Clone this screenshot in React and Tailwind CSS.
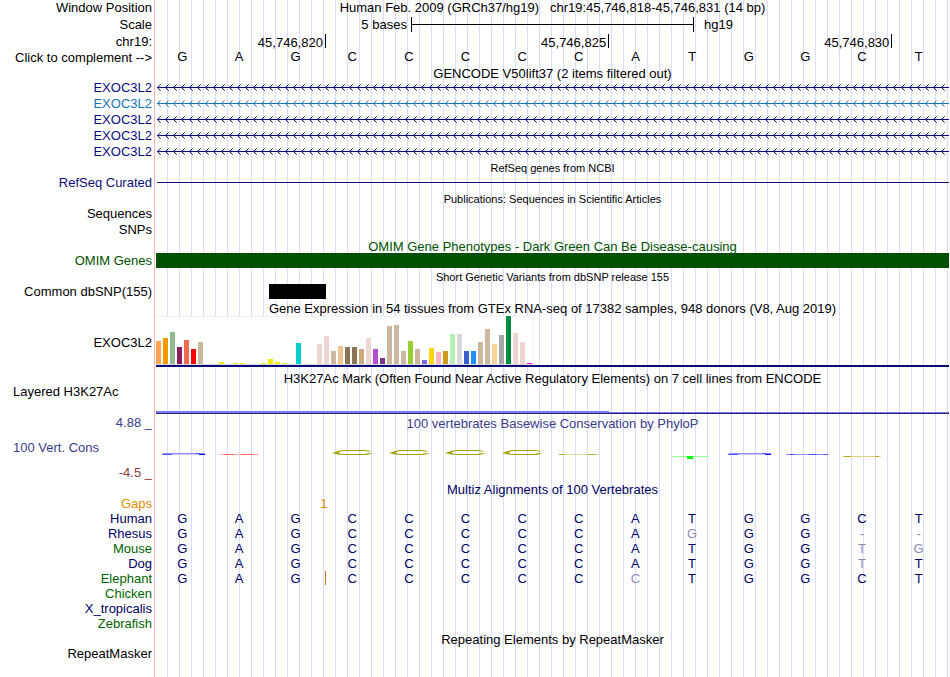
import React, { useState } from "react";

const bases = "GAGCCCCCATGGCT".split("");
const complement = { A: "T", T: "A", G: "C", C: "G" };

// [height, color] for each of the 54 tissues
const tissues = [
  [23, "#ffa54f"], [26, "#ee9a00"], [32, "#8fbc8f"], [17, "#8b1c62"],
  [24, "#ee6a50"], [15, "#ff0000"], [22, "#cdb79e"], [0, "#eeee00"],
  [0, "#eeee00"], [2, "#eeee00"], [0, "#eeee00"], [1, "#eeee00"],
  [1, "#eeee00"], [0, "#eeee00"], [0, "#eeee00"], [1, "#eeee00"],
  [5, "#eeee00"], [2, "#eeee00"], [1, "#eeee00"], [0, "#eeee00"],
  [21, "#00cdcd"], [0, "#ee82ee"], [0, "#9ac0cd"], [20, "#eed5d2"],
  [28, "#eed5d2"], [13, "#cdb79e"], [18, "#eec591"], [17, "#8b7355"],
  [17, "#8b7355"], [15, "#cdaa7d"], [26, "#eed5d2"], [15, "#b452cd"],
  [6, "#7a378b"], [38, "#cdb79e"], [39, "#cdb79e"], [13, "#cdb79e"],
  [23, "#9acd32"], [15, "#cdb79e"], [4, "#7a67ee"], [16, "#ffd700"],
  [12, "#ffb6c1"], [13, "#cd9b1d"], [30, "#b4eeb4"], [30, "#d9d9d9"],
  [13, "#3a5fcd"], [13, "#1e90ff"], [22, "#cdb79e"], [35, "#cdb79e"],
  [20, "#ffd39b"], [29, "#a6a6a6"], [48, "#008b45"], [31, "#eed5d2"],
  [22, "#eed5d2"], [1, "#ff00ff"],
];

const species = [
  { name: "Human", color: "text-[#000064]", seq: "GAGCCCCCATGGCT" },
  { name: "Rhesus", color: "text-[#000064]", seq: "GAGCCCCCAGGG--" },
  { name: "Mouse", color: "text-[#006400]", seq: "GAGCCCCCATGGTG" },
  { name: "Dog", color: "text-[#000064]", seq: "GAGCCCCCATGGTT" },
  { name: "Elephant", color: "text-[#006400]", seq: "GAGCCCCCCTGGCT", insert: 2 },
  { name: "Chicken", color: "text-[#006400]" },
  { name: "X_tropicalis", color: "text-[#000064]" },
  { name: "Zebrafish", color: "text-[#006400]" },
];

const logos = ["blue", "red", "", "C", "C", "C", "C", "flat", "", "green", "blue", "thin", "olive", ""];

function Row({ label, color = "", height = "h-4", children }) {
  return (
    <div className={"flex " + height}>
      <div className={"flex w-[156px] shrink-0 items-center justify-end pr-1 pb-px whitespace-nowrap " + color}>
        {label}
      </div>
      <div className="min-w-0 flex-1">{children}</div>
    </div>
  );
}

function Title({ color = "", small, children }) {
  return (
    <div className="flex h-[15px] pl-[156px]">
      <h2
        className={
          "flex flex-1 items-center justify-center pt-0.5 whitespace-pre " +
          (small ? "text-[11px] " : "") + color
        }
      >
        {children}
      </h2>
    </div>
  );
}

function Gene({ id, color }) {
  return (
    <svg className="block h-4 w-full" shapeRendering="crispEdges">
      <defs>
        <pattern id={id} width="8" height="16" patternUnits="userSpaceOnUse">
          <path d="M1 7h1v1h-1zM2 6h1v1h-1zM2 8h1v1h-1zM3 5h1v1h-1zM3 9h1v1h-1z" fill={color} />
          <path d="M4 4h1v1h-1zM4 10h1v1h-1z" fill={color} opacity="0.6" />
        </pattern>
      </defs>
      <rect width="100%" height="16" fill={"url(#" + id + ")"} />
      <rect x="1" y="7" width="100%" height="1" fill={color} />
    </svg>
  );
}

function Logo({ kind }) {
  return (
    <svg className="block h-3 w-11" viewBox="0 0 44 12" fill="none">
      {kind === "blue" && (
        <g>
          <path d="M1 4.5h42" stroke="#8c8cff" />
          <path d="M0 5.5h10M34 4.5h4" stroke="#5050ff" />
          <path d="M10 5.5h26" stroke="#c8c8ff" />
          <path d="M37 5.5h6" stroke="#0000ff" />
        </g>
      )}
      {kind === "thin" && (
        <g>
          <path d="M1 5.5h42" stroke="#8c8cff" />
          <path d="M5 5.5h5M24 5.5h8M38 5.5h5" stroke="#5050ff" />
        </g>
      )}
      {kind === "red" && (
        <g>
          <path d="M0 5.5h40" stroke="#ffb4b4" />
          <path d="M5 5.5h10M22 5.5h13" stroke="#ff6464" />
        </g>
      )}
      {kind === "C" && (
        <g stroke="#a0a000">
          <path d="M6 2.5Q9 1.5 13 1.5H32Q36 1.5 38 2.5M6 4.5Q9 5.5 13 5.5H32Q36 5.5 38 4.5" />
          <path d="M34 4.5h6" strokeOpacity="0.6" />
          <path d="M0 4 6 2H9L6 4 9 5.5H6z" fill="#a0a000" stroke="none" />
        </g>
      )}
      {kind === "flat" && (
        <g>
          <path d="M1 5.5h40" stroke="#dcdc96" />
          <path d="M1 5.5h6M30 5.5h8" stroke="#b4b43c" />
        </g>
      )}
      {kind === "olive" && (
        <g>
          <path d="M1 7.5h38" stroke="#dcd28c" />
          <path d="M2 7.5h7M33 7.5h4" stroke="#b4aa28" />
        </g>
      )}
      {kind === "green" && (
        <g>
          <path d="M0 7.5h37" stroke="#96ff96" />
          <path d="M15 7h6v3h-6z" fill="#00ff00" />
        </g>
      )}
    </svg>
  );
}

const App = () => {
  const [reversed, setReversed] = useState(false);

  return (
    <main className="min-h-screen overflow-hidden bg-white bg-[linear-gradient(to_right,#fff_154px,#ffb4b4_154px,#ffb4b4_155px,#fff_155px,#fff_156px,transparent_156px),repeating-linear-gradient(to_right,transparent_0,transparent_11px,#dcdcf8_11px,#dcdcf8_12px)] pr-px font-['Liberation_Sans',sans-serif] text-[13px] leading-[15px] text-black">
      <Row label="Window Position">
        <h1 className="text-center whitespace-pre">
          {"Human Feb. 2009 (GRCh37/hg19)   chr19:45,746,818-45,746,831 (14 bp)"}
        </h1>
      </Row>
      <Row label="Scale" height="h-[18px]">
        <div className="grid h-[17px] grid-cols-28 items-center">
          <span className="col-span-9 pr-1 text-right">5 bases</span>
          <div className="col-span-10 flex h-[15px] items-center border-x border-black">
            <div className="h-px w-full bg-black" />
          </div>
          <span className="col-span-9 pl-2.5">hg19</span>
        </div>
      </Row>
      <Row label="chr19:">
        <div className="grid grid-cols-14 text-right">
          <span className="col-span-3 h-[14px] border-r border-black pr-0.5 leading-[17px]">45,746,820</span>
          <span className="col-span-5 h-[14px] border-r border-black pr-0.5 leading-[17px]">45,746,825</span>
          <span className="col-span-5 h-[14px] border-r border-black pr-0.5 leading-[17px]">45,746,830</span>
        </div>
      </Row>
      <Row
        height="h-[15px]"
        label={<button onClick={() => setReversed(!reversed)}>Click to complement --&gt;</button>}
      >
        <div className="grid grid-cols-14 text-center leading-[14px]">
          {bases.map((base, index) => (
            <span key={index} className="pr-1">
              {reversed ? complement[base] : base}
            </span>
          ))}
        </div>
      </Row>

      <Title>GENCODE V50lift37 (2 items filtered out)</Title>
      {["#0c0c78", "#1874b4", "#0c0c78", "#0c0c78", "#0c0c78"].map((color, index) => (
        <Row key={index} label="EXOC3L2" color={index === 1 ? "text-[#1874b4]" : "text-[#0c0c78]"}>
          <Gene id={"gene" + index} color={color} />
        </Row>
      ))}

      <Title small>RefSeq genes from NCBI</Title>
      <Row label="RefSeq Curated" color="text-[#0c0c78]">
        <div className="flex h-[15px] items-center pl-px">
          <div className="h-px w-full bg-[#0c0c78]" />
        </div>
      </Row>

      <Title small>Publications: Sequences in Scientific Articles</Title>
      <Row label="Sequences" />
      <Row label="SNPs" />

      <Title color="text-[#005000]">OMIM Gene Phenotypes - Dark Green Can Be Disease-causing</Title>
      <Row label="OMIM Genes" color="text-[#005000]">
        <div className="h-[15px] bg-[#005000]" />
      </Row>

      <Title small>Short Genetic Variants from dbSNP release 155</Title>
      <Row label="Common dbSNP(155)">
        <div className="grid grid-cols-14">
          <div className="col-start-3 h-[15px] bg-black" />
        </div>
      </Row>

      <Title>Gene Expression in 54 tissues from GTEx RNA-seq of 17382 samples, 948 donors (V8, Aug 2019)</Title>
      <Row label="EXOC3L2" height="h-[55px]">
        <div className="border-b-2 border-[#0c0c78] pt-px">
          <div className="flex h-[49px] w-[378px] items-end gap-0.5 border-b border-[#dcdcdc] bg-white shadow-[inset_-1px_1px_0_#f0f0f0]">
            {tissues.map(([height, color], index) => (
              <div key={index} className="w-[5px]" style={{ height, backgroundColor: color }} />
            ))}
          </div>
        </div>
      </Row>

      <Title>H3K27Ac Mark (Often Found Near Active Regulatory Elements) on 7 cell lines from ENCODE</Title>
      <div className="flex h-[31px]">
        <div className="w-[156px] shrink-0 pl-[13px] leading-[13px]">Layered H3K27Ac</div>
        <div className="flex flex-1 flex-col justify-end pb-0.5">
          <div className="h-px w-4/7 bg-[#7878ff]" />
          <div className="h-px bg-[#7878ff]" />
          <div className="h-px bg-[#28285a]" />
        </div>
      </div>

      <div className="flex h-[65px] text-[#3c3c8c]">
        <div className="flex w-[156px] shrink-0 flex-col justify-between pr-1 pb-0.5 text-right leading-[13px]">
          <span>4.88 _</span>
          <span className="pl-[13px] text-left">100 Vert. Cons</span>
          <span className="text-[#8c3c3c]">-4.5 _</span>
        </div>
        <div className="flex-1">
          <h2 className="text-center">100 vertebrates Basewise Conservation by PhyloP</h2>
          <div className="grid grid-cols-14 pt-[18px]">
            {logos.map((kind, index) => (
              <div key={index} className="flex pl-1.5">
                <Logo kind={kind} />
              </div>
            ))}
          </div>
        </div>
      </div>

      <Title color="text-[#000064]">Multiz Alignments of 100 Vertebrates</Title>
      <table className="w-full table-fixed">
        <colgroup>
          <col className="w-[156px]" />
          {bases.map((base, index) => (
            <col key={index} />
          ))}
        </colgroup>
        <tbody>
          <tr className="h-[15px] text-[#e68a00]">
            <th className="pr-1 text-right font-normal">Gaps</th>
            <td colSpan={2} />
            <td colSpan={2} className="pr-1 text-center">1</td>
            <td colSpan={10} />
          </tr>
          {species.map(({ name, color, seq, insert }) => (
            <tr key={name} className="h-[15px]">
              <th className={"pr-1 text-right font-normal " + color}>{name}</th>
              {seq ? (
                seq.split("").map((base, index) => (
                  <td
                    key={index}
                    className={
                      "relative pr-1 text-center " +
                      (base === bases[index] ? "text-[#000064]" : "text-[#8c8cb9]")
                    }
                  >
                    {base}
                    {insert === index && (
                      <span className="absolute top-0 right-0 h-[14px] w-px bg-[#c87814]" />
                    )}
                  </td>
                ))
              ) : (
                <td colSpan={14} />
              )}
            </tr>
          ))}
        </tbody>
      </table>

      <Title>Repeating Elements by RepeatMasker</Title>
      <Row label="RepeatMasker" />
    </main>
  );
};

export default App;
